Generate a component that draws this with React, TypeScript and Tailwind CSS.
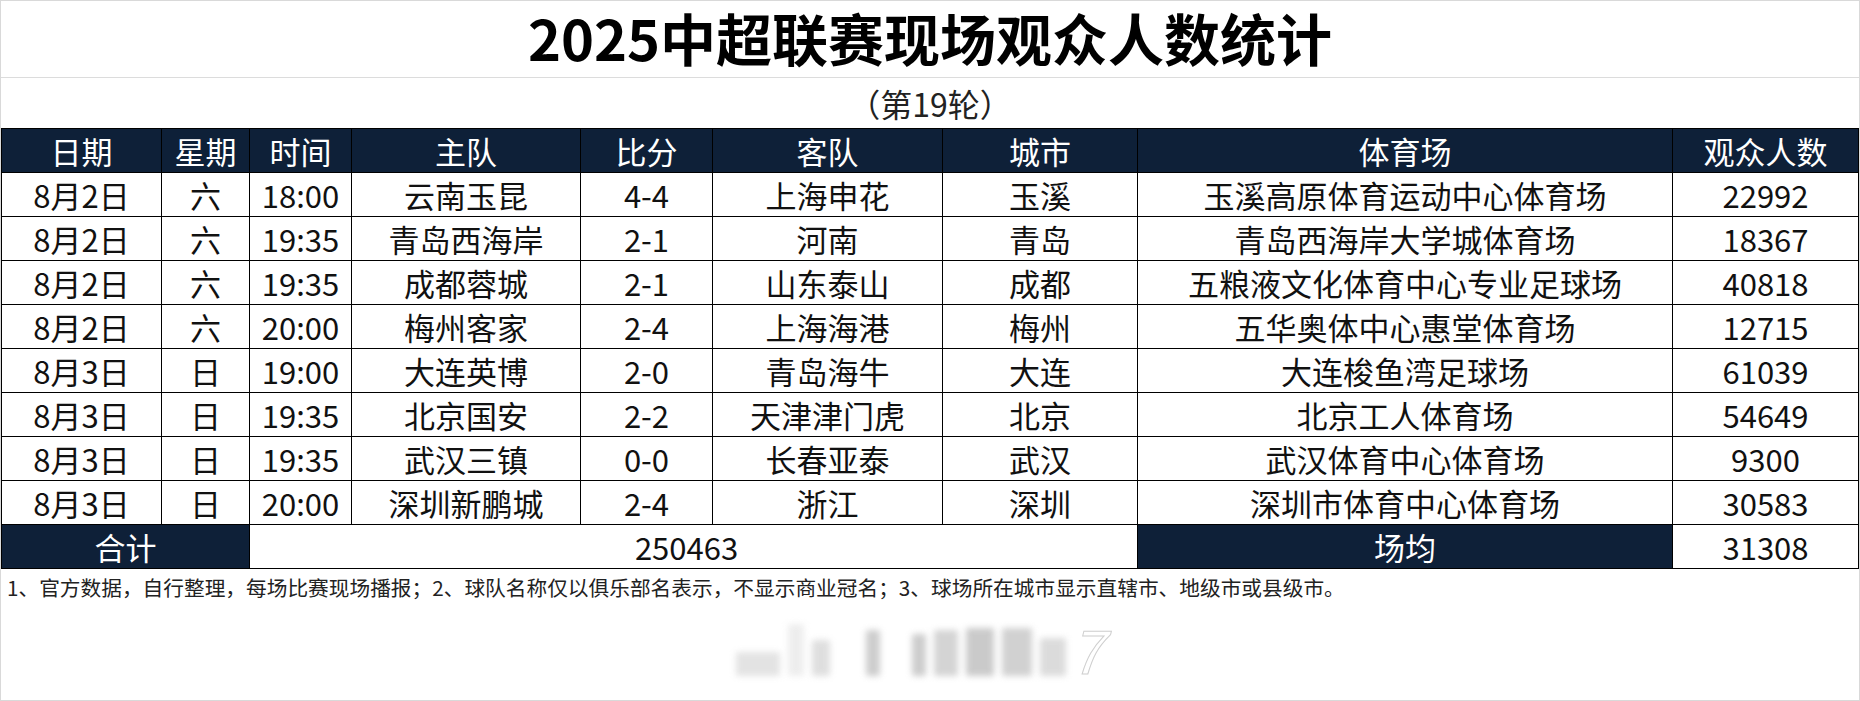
import React from "react";

const cols = [160, 88, 102, 229, 132, 230, 195, 535, 186];

const heads = ["日期", "星期", "时间", "主队", "比分", "客队", "城市", "体育场", "观众人数"];

const rows = [
  ["8月2日", "六", "18:00", "云南玉昆", "4-4", "上海申花", "玉溪", "玉溪高原体育运动中心体育场", "22992"],
  ["8月2日", "六", "19:35", "青岛西海岸", "2-1", "河南", "青岛", "青岛西海岸大学城体育场", "18367"],
  ["8月2日", "六", "19:35", "成都蓉城", "2-1", "山东泰山", "成都", "五粮液文化体育中心专业足球场", "40818"],
  ["8月2日", "六", "20:00", "梅州客家", "2-4", "上海海港", "梅州", "五华奥体中心惠堂体育场", "12715"],
  ["8月3日", "日", "19:00", "大连英博", "2-0", "青岛海牛", "大连", "大连梭鱼湾足球场", "61039"],
  ["8月3日", "日", "19:35", "北京国安", "2-2", "天津津门虎", "北京", "北京工人体育场", "54649"],
  ["8月3日", "日", "19:35", "武汉三镇", "0-0", "长春亚泰", "武汉", "武汉体育中心体育场", "9300"],
  ["8月3日", "日", "20:00", "深圳新鹏城", "2-4", "浙江", "深圳", "深圳市体育中心体育场", "30583"],
];

const font = { fontFamily: '"Noto Sans CJK SC", "Liberation Sans", sans-serif' };

// blurred watermark strokes
const marks = [
  { w: 44, h: 24, c: "bg-[#dadada]" },
  { w: 16, h: 52, c: "bg-[#e8e8e8]" },
  { w: 18, h: 36, c: "bg-[#d4d4d4]" },
  { w: 20, h: 8, c: "bg-transparent" },
  { w: 14, h: 46, c: "bg-[#bdbdbd]" },
  { w: 16, h: 10, c: "bg-transparent" },
  { w: 14, h: 42, c: "bg-[#bcbcbc]" },
  { w: 24, h: 46, c: "bg-[#c6c6c6]" },
  { w: 28, h: 48, c: "bg-[#b9b9b9]" },
  { w: 30, h: 48, c: "bg-[#c2c2c2]" },
  { w: 26, h: 38, c: "bg-[#d0d0d0]" },
];

export default function App() {
  return (
    <div
      className="w-[1860px] h-[701px] bg-white border border-[#d9d9d9] flex flex-col overflow-hidden text-[#111]"
      style={font}
    >
      <div className="h-[77px] flex items-center justify-center border-b border-[#dcdcdc] shrink-0 pb-[4px]">
        <h1 className="text-[56px] font-bold text-black leading-[66px]">2025中超联赛现场观众人数统计</h1>
      </div>
      <div className="h-[50px] flex items-center justify-center shrink-0">
        <span className="text-[32px] leading-none text-[#222]">（第19轮）</span>
      </div>

      <table className="table-fixed border-collapse w-[1857px] text-[31px] leading-none">
        <colgroup>
          {cols.map((w, i) => (
            <col key={i} style={{ width: w }} />
          ))}
        </colgroup>
        <thead>
          <tr className="h-[44px] bg-[#0e2038] text-white">
            {heads.map((h) => (
              <th key={h} className="border border-black font-normal text-center p-0">
                {h}
              </th>
            ))}
          </tr>
        </thead>
        <tbody>
          {rows.map((r, i) => (
            <tr key={i} className="h-[44px]">
              {r.map((c, j) => (
                <td key={j} className="border border-black text-center p-0 whitespace-nowrap">
                  {c}
                </td>
              ))}
            </tr>
          ))}
          <tr className="h-[44px]">
            <td colSpan={2} className="border border-black bg-[#0e2038] text-white text-center p-0">
              合计
            </td>
            <td colSpan={5} className="border border-black text-center p-0 pr-[14px]">
              250463
            </td>
            <td className="border border-black bg-[#0e2038] text-white text-center p-0">场均</td>
            <td className="border border-black text-center p-0">31308</td>
          </tr>
        </tbody>
      </table>

      <p className="pl-[6px] pt-[4px] text-[20.7px] leading-[28px] text-[#222] whitespace-nowrap">
        1、官方数据，自行整理，每场比赛现场播报；2、球队名称仅以俱乐部名表示，不显示商业冠名；3、球场所在城市显示直辖市、地级市或县级市。
      </p>

      <div className="flex-1 flex items-center justify-center pr-[20px] pb-[6px]">
        <div className="flex items-end gap-[8px] h-[56px] blur-[3px] opacity-75">
          {marks.map((m, i) => (
            <div key={i} className={`${m.c} rounded-[2px]`} style={{ width: m.w, height: m.h }} />
          ))}
        </div>
        <span className="ml-[4px] text-[60px] italic text-white leading-none [-webkit-text-stroke:1px_#cfcfcf]">7</span>
      </div>
    </div>
  );
}
